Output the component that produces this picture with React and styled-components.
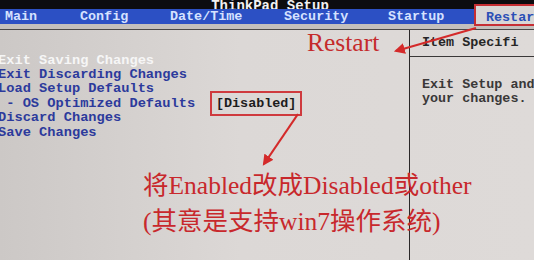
import styled, { createGlobalStyle } from 'styled-components';

const GlobalStyle = createGlobalStyle`
  html, body {
    margin: 0;
    padding: 0;
    background: #d6d2d0;
  }
`;

const mono = `"Liberation Mono", "DejaVu Sans Mono", monospace`;
const serif = `"Liberation Serif", "Noto Sans CJK SC", serif`;

const menuItems = [
  { label: 'Main', left: 5 },
  { label: 'Config', left: 80 },
  { label: 'Date/Time', left: 170 },
  { label: 'Security', left: 284 },
  { label: 'Startup', left: 388 },
];

const options = [
  { label: 'Exit Saving Changes', active: true },
  { label: 'Exit Discarding Changes' },
  { label: 'Load Setup Defaults' },
  { label: ' - OS Optimized Defaults', value: '[Disabled]' },
  { label: 'Discard Changes' },
  { label: 'Save Changes' },
];

export default function App() {
  return (
    <>
      <GlobalStyle />
      <Screen>
        <TitleBar>
          <Title>ThinkPad Setup</Title>
        </TitleBar>
        <MenuBar>
          {menuItems.map((it) => (
            <MenuItem key={it.label} style={{ left: it.left }}>
              {it.label}
            </MenuItem>
          ))}
          <ActiveTab>Restar</ActiveTab>
        </MenuBar>
        <Band />
        <Body>
          <LeftPane>
            {options.map((it) => (
              <OptionRow key={it.label} $active={it.active}>
                <OptionLabel>{it.label}</OptionLabel>
                {it.value && <OptionValue>{it.value}</OptionValue>}
              </OptionRow>
            ))}
          </LeftPane>
          <RightPane>
            <HelpHeader>Item Specifi</HelpHeader>
            <HelpText>
              Exit Setup and
              <br />
              your changes.
            </HelpText>
          </RightPane>
        </Body>

        <RestartNote>Restart</RestartNote>
        <Caption>
          <CaptionLine>将Enabled改成Disabled或other</CaptionLine>
          <CaptionLine>(其意是支持win7操作系统)</CaptionLine>
        </Caption>
        <Arrows width="534" height="260" viewBox="0 0 534 260">
          <defs>
            <marker
              id="head"
              viewBox="0 0 10 10"
              refX="8"
              refY="5"
              markerWidth="5"
              markerHeight="5"
              orient="auto-start-reverse"
            >
              <path d="M0 0 L10 5 L0 10 Z" fill="#d42a2a" />
            </marker>
          </defs>
          <line x1="476" y1="28" x2="396" y2="51" stroke="#d42a2a" strokeWidth="2.2" markerEnd="url(#head)" />
          <line x1="298" y1="114" x2="264" y2="164" stroke="#d42a2a" strokeWidth="2.2" markerEnd="url(#head)" />
        </Arrows>
      </Screen>
    </>
  );
}

const Screen = styled.div`
  position: relative;
  width: 534px;
  height: 260px;
  overflow: hidden;
  display: flex;
  flex-direction: column;
  background: linear-gradient(90deg, #ccc8c6 0%, #dcd8d6 45%, #dedad8 100%);
`;

const TitleBar = styled.div`
  height: 9px;
  background: #0c0c10;
  display: flex;
  justify-content: center;
  align-items: flex-end;
  overflow: hidden;
`;

const Title = styled.span`
  font-family: ${mono};
  font-weight: bold;
  font-size: 14px;
  line-height: 14px;
  margin-bottom: -4px;
  margin-left: 6px;
  color: #f2f2f2;
`;

const MenuBar = styled.div`
  position: relative;
  height: 15px;
  background: #2c50c4;
`;

const MenuItem = styled.span`
  position: absolute;
  top: 0;
  font-family: ${mono};
  font-weight: bold;
  font-size: 13.4px;
  line-height: 15px;
  color: #d6e2ff;
`;

const ActiveTab = styled.span`
  position: absolute;
  top: -5px;
  left: 474px;
  width: 70px;
  height: 22px;
  box-sizing: border-box;
  padding: 5px 0 0 10px;
  border: 2px solid #c62e34;
  background: #d8d6d6;
  font-family: ${mono};
  font-weight: bold;
  font-size: 13.4px;
  line-height: 13px;
  color: #2a4fb6;
`;

const Band = styled.div`
  height: 5px;
  background: #c4c0bd;
  border-bottom: 1.5px solid #4a4848;
`;

const Body = styled.div`
  flex: 1;
  display: flex;
`;

const LeftPane = styled.div`
  flex: 1;
  padding-top: 23px;
  margin-left: -2px;
  display: flex;
  flex-direction: column;
`;

const OptionRow = styled.div`
  display: flex;
  height: 14.4px;
  align-items: center;
  font-family: ${mono};
  font-weight: bold;
  font-size: 13.7px;
  white-space: pre;
  color: ${(p) => (p.$active ? '#f6f6f6' : '#2c3a9c')};
`;

const OptionLabel = styled.span`
  width: 217px;
`;

const OptionValue = styled.span`
  color: #1c1c1c;
  font-size: 13.4px;
  outline: 2px solid #cf3a3e;
  outline-offset: 3px;
  padding: 0 1px;
`;

const RightPane = styled.div`
  width: 124px;
  border-left: 1.5px solid #2a2828;
  display: flex;
  flex-direction: column;
`;

const HelpHeader = styled.div`
  height: 26px;
  border-bottom: 1.5px solid #3a3838;
  padding-left: 12px;
  font-family: ${mono};
  font-weight: bold;
  font-size: 13.4px;
  line-height: 26px;
  color: #262626;
  white-space: nowrap;
`;

const HelpText = styled.div`
  padding: 21px 0 0 12px;
  font-family: ${mono};
  font-weight: bold;
  font-size: 13.4px;
  line-height: 14px;
  color: #3a3838;
  white-space: nowrap;
`;

const RestartNote = styled.div`
  position: absolute;
  left: 307px;
  top: 29px;
  font-family: ${serif};
  font-size: 25.5px;
  line-height: 28px;
  color: #c52a2c;
`;

const Caption = styled.div`
  position: absolute;
  left: 143px;
  top: 172px;
  display: flex;
  flex-direction: column;
  gap: 8px;
`;

const CaptionLine = styled.div`
  font-family: ${serif};
  font-size: 25.5px;
  line-height: 28px;
  color: #c8282c;
  white-space: nowrap;
`;

const Arrows = styled.svg`
  position: absolute;
  left: 0;
  top: 0;
  pointer-events: none;
`;
